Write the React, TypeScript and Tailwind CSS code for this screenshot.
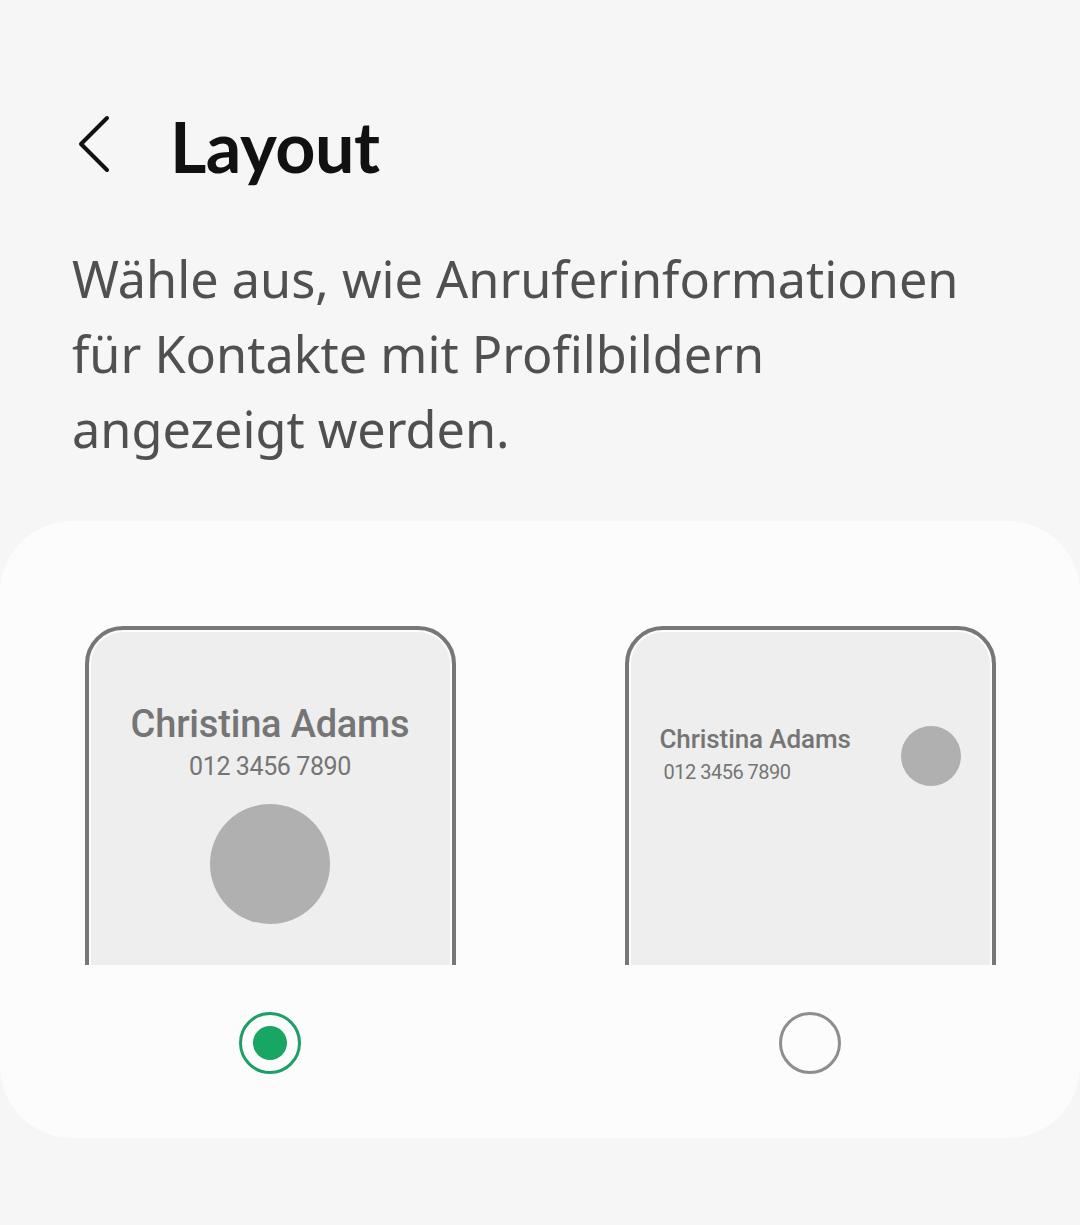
export default function App() {
  return (
    <div className="min-h-[1225px] w-[1080px] bg-[#f6f6f6] font-['Noto_Sans',sans-serif]">
      {/* header */}
      <div className="flex h-[290px] flex-col">
        <div className="flex items-center pl-[76px] pt-[106px]">
          <svg width="36" height="58" viewBox="0 0 36 58" fill="none" className="-mt-[4px]">
            <path d="M31 3 L5 29 L31 55" stroke="#111" strokeWidth="4" strokeLinecap="round" strokeLinejoin="round" />
          </svg>
          <h1 className="ml-[58px] font-['Lato',sans-serif] text-[70px] leading-[80px] font-bold tracking-[-0.5px] text-[#111]">Layout</h1>
        </div>
      </div>

      <p className="-mt-[49px] pl-[72px] pr-[90px] text-[50.4px] leading-[75px] text-[#505050]">
        Wähle aus, wie Anruferinformationen für Kontakte mit Profilbildern angezeigt werden.
      </p>

      {/* card */}
      <div className="mt-[55px] rounded-[72px] bg-[#fcfcfc] pb-[64px] pt-[105px]">
        <div className="grid grid-cols-2">
          {/* option 1 */}
          <div className="flex flex-col items-center">
            <div className="h-[339px] w-[371px] overflow-hidden">
              <div className="h-[420px] rounded-[38px] border-[4px] border-[#777] p-[2px]">
                <div className="flex h-full flex-col items-center rounded-[32px] bg-[#eeeeee] font-['Roboto',sans-serif] text-[#757575]">
                  <div className="mt-[70px] text-[38px] leading-[44px] font-medium tracking-[-0.2px]">Christina Adams</div>
                  <div className="mt-[6px] text-[25px] leading-[30px] tracking-[-0.4px]">012 3456 7890</div>
                  <div className="mt-[22px] h-[120px] w-[120px] rounded-full bg-[#b0b0b0]" />
                </div>
              </div>
            </div>
            <div className="mt-[47px] flex h-[62px] w-[62px] items-center justify-center rounded-full border-[3px] border-[#1e9e68]">
              <div className="h-[34px] w-[34px] rounded-full bg-[#17a664]" />
            </div>
          </div>

          {/* option 2 */}
          <div className="flex flex-col items-center">
            <div className="h-[339px] w-[371px] overflow-hidden">
              <div className="h-[420px] rounded-[38px] border-[4px] border-[#777] p-[2px]">
                <div className="flex h-full items-start rounded-[32px] bg-[#eeeeee] pl-[29px] pr-[29px] pt-[94px] font-['Roboto',sans-serif] text-[#757575]">
                  <div className="flex-1">
                    <div className="-mt-[2px] text-[26px] leading-[30px] font-medium tracking-[-0.1px]">Christina Adams</div>
                    <div className="ml-[4px] mt-[6px] text-[20px] leading-[24px] tracking-[-0.5px]">012 3456 7890</div>
                  </div>
                  <div className="h-[60px] w-[60px] rounded-full bg-[#b0b0b0]" />
                </div>
              </div>
            </div>
            <div className="mt-[47px] h-[62px] w-[62px] rounded-full border-[3px] border-[#8e8e8e]" />
          </div>
        </div>
      </div>
    </div>
  );
}
